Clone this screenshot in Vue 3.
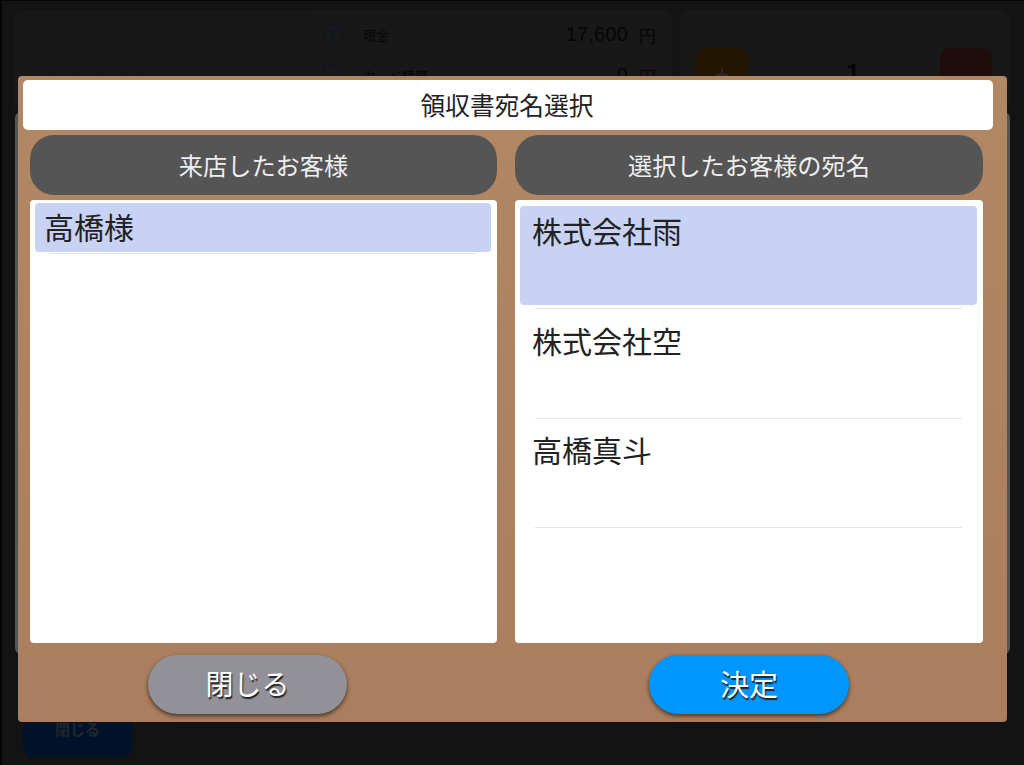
<template>
  <div class="screen">
    <!-- 後ろの会計画面 -->
    <div class="back-top">
      <div class="back-left">
        <div class="back-left-label">領収書宛名</div>
      </div>
      <div class="back-pay">
        <div class="pay-row" v-for="pay in payments" :key="pay.name">
          <span class="pay-icon" :class="pay.iconClass">{{ pay.icon }}</span>
          <span class="pay-name">{{ pay.name }}</span>
          <span class="pay-value">{{ pay.value }}</span>
          <span class="pay-unit">円</span>
        </div>
      </div>
      <div class="back-count">
        <div class="count-btn plus">+</div>
        <div class="count-num">1<span class="count-unit">枚</span></div>
        <div class="count-btn minus">-</div>
      </div>
    </div>
    <div class="back-close">閉じる</div>

    <!-- ダイアログ -->
    <div class="under-panel"></div>
    <div class="modal">
      <div class="modal-title">領収書宛名選択</div>
      <div class="columns">
        <div class="column">
          <div class="column-head">来店したお客様</div>
          <div class="list list-left">
            <div
              class="row-left"
              :class="{ selected: index === 0 }"
              v-for="(guest, index) in guests"
              :key="guest"
            >
              {{ guest }}
            </div>
          </div>
        </div>
        <div class="column">
          <div class="column-head">選択したお客様の宛名</div>
          <div class="list list-right">
            <div
              class="row-right"
              :class="{ selected: index === 0 }"
              v-for="(name, index) in addressees"
              :key="name"
            >
              {{ name }}
            </div>
          </div>
        </div>
      </div>
      <div class="footer">
        <button class="btn btn-close">閉じる</button>
        <button class="btn btn-ok">決定</button>
      </div>
    </div>
  </div>
</template>

<script setup>
const payments = [
  { icon: '¥', iconClass: 'round', name: '現金', value: '17,600' },
  { icon: '', iconClass: 'square', name: 'カード精算', value: '0' }
]
const guests = ['高橋様']
const addressees = ['株式会社雨', '株式会社空', '高橋真斗']
</script>

<style>
html,
body {
  margin: 0;
  background: #131313;
}
</style>

<style scoped>
.screen {
  position: relative;
  width: 1024px;
  height: 765px;
  overflow: hidden;
  background: #131313;
  border-top: 1px solid #050505;
  border-left: 2px solid #050505;
  box-sizing: border-box;
  font-family: "Noto Sans CJK JP", "Noto Sans", sans-serif;
}

.back-top {
  display: flex;
  padding: 9px 14px 0 11px;
}

.back-left {
  width: 300px;
  height: 100px;
  background: #171717;
  border-radius: 10px 0 0 0;
}

.back-left-label {
  margin: 58px 0 0 32px;
  font-size: 22px;
  color: #060606;
}

.back-pay {
  width: 359px;
  height: 100px;
  background: #181818;
  border-radius: 0 10px 0 0;
  box-sizing: border-box;
  padding: 12px 16px 0 10px;
}

.pay-row {
  display: flex;
  align-items: center;
  height: 24px;
  margin-bottom: 17px;
}

.pay-icon {
  display: flex;
  align-items: center;
  justify-content: center;
  width: 20px;
  height: 20px;
  box-sizing: border-box;
  border: 1.5px solid #0c1320;
  font-size: 11px;
  color: #0c1320;
}

.round {
  border-radius: 50%;
}

.square {
  border-radius: 3px;
}

.pay-name {
  margin-left: 20px;
  font-size: 13px;
  color: #060606;
}

.pay-value {
  margin-left: auto;
  font-family: "Liberation Sans", sans-serif;
  font-size: 20px;
  letter-spacing: 0.2px;
  color: #060606;
}

.pay-unit {
  margin-left: 11px;
  font-size: 17px;
  color: #060606;
}

.back-count {
  display: flex;
  justify-content: space-between;
  width: 330px;
  height: 100px;
  margin-left: 8px;
  background: #181818;
  border-radius: 10px;
  box-sizing: border-box;
  padding: 38px 18px 0 16px;
}

.count-btn {
  width: 52px;
  height: 52px;
  border-radius: 10px;
  text-align: center;
  font-size: 26px;
  line-height: 52px;
  color: #2a2a2a;
}

.plus {
  background: #231600;
}

.minus {
  background: #200c0c;
}

.count-num {
  margin: 0 0 0 44px;
  font-size: 36px;
  line-height: 52px;
  color: #060606;
}

.count-unit {
  margin-left: 12px;
  font-size: 14px;
}

.back-close {
  position: absolute;
  left: 21px;
  top: 700px;
  width: 109px;
  height: 56px;
  border-radius: 10px;
  background: #00122a;
  color: #22262c;
  font-size: 15px;
  font-weight: 700;
  text-align: center;
  line-height: 56px;
}

.under-panel {
  position: absolute;
  left: 13px;
  top: 111px;
  width: 995px;
  height: 542px;
  background: #555;
  border-radius: 6px;
}

.modal {
  position: absolute;
  left: 16px;
  top: 75px;
  width: 989px;
  height: 646px;
  box-sizing: border-box;
  padding: 4px 0 0;
  background: linear-gradient(#b28763, #aa7e5e);
  border-radius: 4px;
}

.modal-title {
  display: flex;
  align-items: center;
  justify-content: center;
  height: 50px;
  margin: 0 14px 0 5px;
  padding: 0 2px 2px 0;
  box-sizing: border-box;
  background: #fff;
  border-radius: 5px;
  font-size: 24.7px;
  color: #222;
}

.columns {
  display: grid;
  grid-template-columns: 467px 468px;
  column-gap: 18px;
  padding: 5px 0 0 12px;
}

.column-head {
  height: 60px;
  line-height: 59px;
  text-align: center;
  background: #555;
  border-radius: 24px;
  font-size: 24.2px;
  color: #eee;
}

.list {
  height: 443px;
  margin-top: 5px;
  box-sizing: border-box;
  background: #fff;
  border-radius: 4px;
}

.list-left {
  padding: 3px 6px 0 5px;
}

.list-right {
  padding: 6px 6px 0 5px;
}

.row-left {
  position: relative;
  height: 49px;
  padding: 0 9px;
  line-height: 46px;
  font-size: 30px;
  color: #222;
  border-radius: 4px;
}

.row-left::after {
  content: "";
  position: absolute;
  left: 15px;
  right: 15px;
  bottom: -2px;
  height: 1px;
  background: #e4e4e4;
}

.row-right {
  position: relative;
  height: 99px;
  margin-bottom: 10.5px;
  padding: 0 12px;
  line-height: 48px;
  font-size: 30px;
  color: #222;
  border-radius: 4px;
}

.row-right::after {
  content: "";
  position: absolute;
  left: 15px;
  right: 15px;
  bottom: -4px;
  height: 1px;
  background: #e4e4e4;
}

.selected {
  background: #c8d2f5;
}

.footer {
  display: flex;
  padding: 12px 0 0 130px;
  gap: 302px;
}

.btn {
  width: 199px;
  height: 59px;
  padding: 0 0 3px;
  border: none;
  border-radius: 30px;
  box-shadow: 0 2px 4px rgba(0, 0, 0, 0.6);
  font-family: inherit;
  font-size: 28px;
  color: #fff;
  text-shadow: 1px 2px 1px #222;
}

.btn-close {
  background: #919197;
}

.btn-ok {
  width: 200px;
  background: #0096ff;
  font-size: 29px;
}
</style>
